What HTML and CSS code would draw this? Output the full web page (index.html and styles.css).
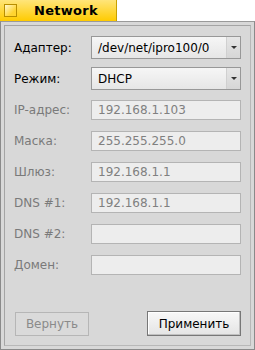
FILE: index.html
```html
<!DOCTYPE html>
<html>
<head>
<meta charset="utf-8">
<link rel="stylesheet" href="styles.css">
</head>
<body>
<div class="tab">
  <span class="zoom-box"></span>
  <span class="title">Network</span>
</div>
<div class="window">
  <div class="inner">
    <div class="form">
      <div class="row">
        <span class="label">Адаптер:</span>
        <div class="select"><span class="val">/dev/net/ipro100/0</span><span class="arrow"><span class="tri"></span></span></div>
      </div>
      <div class="row">
        <span class="label">Режим:</span>
        <div class="select"><span class="val">DHCP</span><span class="arrow"><span class="tri"></span></span></div>
      </div>
      <div class="row">
        <span class="label dis">IP-адрес:</span>
        <div class="field">192.168.1.103</div>
      </div>
      <div class="row">
        <span class="label dis">Маска:</span>
        <div class="field">255.255.255.0</div>
      </div>
      <div class="row">
        <span class="label dis">Шлюз:</span>
        <div class="field">192.168.1.1</div>
      </div>
      <div class="row">
        <span class="label dis">DNS #1:</span>
        <div class="field">192.168.1.1</div>
      </div>
      <div class="row">
        <span class="label dis">DNS #2:</span>
        <div class="field"></div>
      </div>
      <div class="row">
        <span class="label dis">Домен:</span>
        <div class="field"></div>
      </div>
    </div>
    <div class="buttons">
      <div class="btn disabled">Вернуть</div>
      <div class="btn">Применить</div>
    </div>
  </div>
</div>
</body>
</html>
```

FILE: styles.css
```css
html, body {
  margin: 0;
  padding: 0;
  background: #ffffff;
  font-family: "DejaVu Sans", sans-serif;
  font-size: 12px;
}
.tab {
  width: 117px;
  height: 21px;
  box-sizing: border-box;
  background: linear-gradient(#ffe57a, #ffcb00);
  border-right: 1px solid #c8a000;
  display: flex;
  align-items: center;
  position: relative;
}
.zoom-box {
  position: absolute;
  left: 4px;
  top: 4px;
  width: 13px;
  height: 13px;
  box-sizing: border-box;
  border: 1px solid #b88e00;
  background: linear-gradient(135deg, #fff8d0, #ffd430 70%);
}
.title {
  font-weight: bold;
  font-size: 13px;
  color: #000;
  margin-left: 34px;
  letter-spacing: 0.3px;
}
.window {
  width: 255px;
  height: 329px;
  box-sizing: border-box;
  border: 1px solid #8a8a8a;
  background: #d8d8d8;
  padding: 3px;
  border-top-color: #9a9a9a;
}
.inner {
  height: 100%;
  box-sizing: border-box;
  border: 1px solid #a4a4a4;
  border-right-color: #b8b8b8;
  border-bottom-color: #b8b8b8;
  display: flex;
  flex-direction: column;
  padding: 6px 9px 9px 9px;
}
.form {
  display: flex;
  flex-direction: column;
}
.row {
  height: 31px;
  display: flex;
  align-items: center;
}
.label {
  width: 77px;
  color: #000;
}
.label.dis {
  color: #7a7a7a;
}
.select {
  width: 150px;
  height: 23px;
  box-sizing: border-box;
  border: 1px solid #989898;
  background: linear-gradient(#f6f6f6, #e6e6e6);
  display: flex;
  align-items: center;
}
.select .val {
  flex: 1;
  padding-left: 6px;
  color: #000;
}
.arrow {
  width: 13px;
  height: 100%;
  border-left: 1px solid #d0d0d0;
  background: linear-gradient(#e6e6e6, #d6d6d6);
  display: flex;
  align-items: center;
  justify-content: center;
}
.tri {
  width: 0;
  height: 0;
  border-left: 3px solid transparent;
  border-right: 3px solid transparent;
  border-top: 3px solid #333;
}
.field {
  width: 150px;
  height: 20px;
  box-sizing: border-box;
  border: 1px solid #b4b4b4;
  background: #ededed;
  color: #808080;
  padding-left: 6px;
  line-height: 18px;
}
.buttons {
  margin-top: auto;
  display: flex;
  justify-content: space-between;
  align-items: flex-end;
  padding-left: 1px;
}
.btn {
  height: 25px;
  box-sizing: border-box;
  border: 1px solid #777;
  background: linear-gradient(#f8f8f8, #e4e4e4);
  box-shadow: inset -1px -1px 0 #c0c0c0, inset 1px 1px 0 #ffffff;
  display: flex;
  align-items: center;
  justify-content: center;
  color: #000;
  width: 94px;
}
.btn.disabled {
  width: 74px;
  height: 24px;
  border-color: #b6b6b6;
  background: #dadada;
  box-shadow: none;
  color: #8a8a8a;
}
```
